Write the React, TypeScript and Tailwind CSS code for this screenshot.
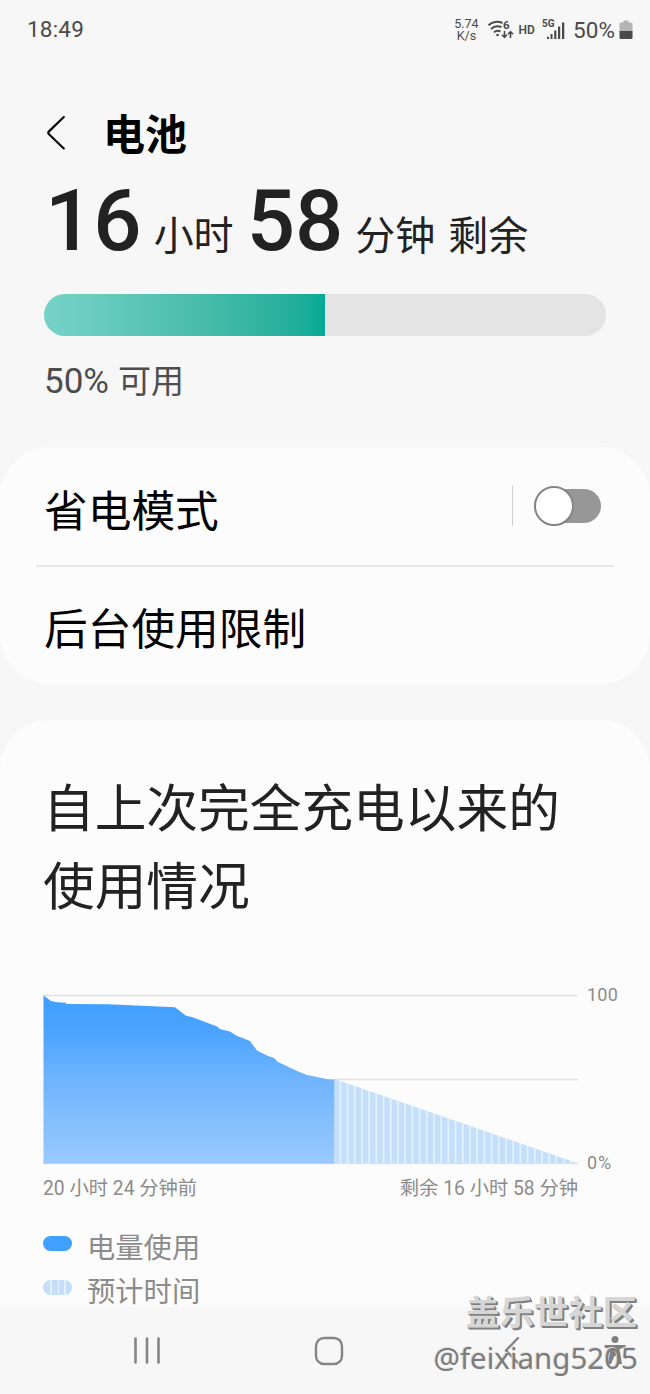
import type { ReactNode } from "react";

const FONT = "font-[Roboto,'Noto_Sans_CJK_SC',sans-serif]";

function StatusBar() {
  return (
    <header className="flex h-[58px] shrink-0 items-center pl-[27px] pr-[17px] text-[#4a4a4a]">
      <span className="text-[22.5px] leading-[28px] tracking-[0.2px]">18:49</span>
      <div className="ml-auto flex items-center">
        <div className="mt-px flex flex-col items-center text-[12.5px] leading-[12px]">
          <span>5.74</span>
          <span>K/s</span>
        </div>
        <svg width="28" height="22" viewBox="0 0 28 22" className="ml-[8px] mt-[2px]" fill="none" stroke="#4a4a4a" strokeWidth="2">
          <path d="M1.500 6.200C5 2.600 11 1.900 15.500 4" />
          <path d="M4 10C7 7.200 10.500 6.700 14.500 8" />
          <path d="M7 13.200C9 11.600 11.500 11.500 13.500 12.500" />
          <circle cx="10.500" cy="16" r="1.300" fill="#4a4a4a" stroke="none" />
          <path d="M17.500 12v6M15 15.800l2.500 2.600 2.500-2.600M23.500 19v-6M21 15.300l2.500-2.600 2.500 2.600" strokeWidth="1.600" />
          <text x="16" y="9.500" fontSize="11.500" fontWeight="700" fontFamily="Roboto" fill="#4a4a4a" stroke="none">6</text>
        </svg>
        <span className="ml-[4px] mt-[2px] text-[12px] font-semibold leading-none">HD</span>
        <div className="relative ml-[7px] mt-[2px] h-[22px] w-[24px]">
          <span className="absolute left-0 top-0 text-[10px] font-bold leading-none">5G</span>
          <svg width="24" height="22" viewBox="0 0 24 22" fill="#4a4a4a">
            <path d="M5 17.800h2v2.200H5zM8.500 15h2v5h-2zM12.200 11.500h2.200V20h-2.200zM16 7.500h2.200V20H16zM20 3.500h2.300V20H20z" />
          </svg>
        </div>
        <span className="ml-[7px] mt-px text-[22.5px] leading-[28px] tracking-[0.1px]">50%</span>
        <svg width="14" height="20" viewBox="0 0 14 20" className="ml-[4px] mt-px">
          <path d="M4.500.500h5v2H12a1.500 1.500 0 0 1 1.500 1.500v8H.500V4A1.500 1.500 0 0 1 2 2.500h2.500z" fill="#b5b5b5" />
          <path d="M.500 11h13v6.500a1.500 1.500 0 0 1-1.500 1.500H2a1.500 1.500 0 0 1-1.500-1.500z" fill="#4a4a4a" />
        </svg>
      </div>
    </header>
  );
}

function Big({ children }: { children: ReactNode }) {
  return <span className="text-[85px] font-medium">{children}</span>;
}

function Summary() {
  return (
    <section className="flex h-[389px] shrink-0 flex-col">
      <div className="flex h-[123px] items-center pl-[46px] pt-[29px]">
        <svg width="20" height="36" viewBox="0 0 20 36" fill="none" stroke="#0a0a0a" strokeWidth="2.200" strokeLinecap="round" strokeLinejoin="round" className="-mt-[3px]">
          <path d="M17.800 2 3 16.400Q1.600 17.800 3 19.200L17.800 33.500" />
        </svg>
        <h1 className="ml-[37px] mt-[4px] text-[42px] font-bold leading-[50px] text-black">电池</h1>
      </div>
      <div className="flex h-[80px] items-baseline whitespace-nowrap pl-[45px] text-[40px] leading-[80px] text-[#222]">
        <Big>16</Big>
        <span className="ml-[12px]">小时</span>
        <span className="ml-[13px]"><Big>58</Big></span>
        <span className="ml-[12px]">分钟</span>
        <span className="ml-[13px]">剩余</span>
      </div>
      <div className="ml-[44px] mt-[33px] h-[42px] w-[562px] shrink-0 overflow-hidden rounded-full bg-[#e4e4e4]">
        <div className="h-full w-1/2 bg-linear-to-r from-[#76d3c7] to-[#03aa96]" />
      </div>
      <p className="ml-[44px] mt-[26px] flex items-baseline text-[35px] leading-[40px] text-[#4d4d4d]">
        50%<span className="ml-[9px] text-[33px]">可用</span>
      </p>
    </section>
  );
}

function Toggle() {
  return (
    <div className="flex h-[40px] w-[67px] items-center">
      <div className="flex h-[34px] w-full items-center rounded-full bg-[#979797]">
        <div className="size-[40px] shrink-0 rounded-full border-2 border-[#858585] bg-white" />
      </div>
    </div>
  );
}

function ModeCard() {
  return (
    <section className="flex h-[237px] shrink-0 flex-col rounded-[50px] bg-[#fcfcfc] px-[36px] text-[43.700px] leading-[60px] text-black">
      <div className="flex h-[120px] items-center border-b-2 border-[#e8e8e8] pl-[8px] pr-[13px]">
        <span className="mt-[11px]">省电模式</span>
        <div className="ml-auto flex items-center gap-[21px]">
          <div className="h-[40px] w-px bg-[#cdcdcd]" />
          <Toggle />
        </div>
      </div>
      <div className="flex flex-1 items-center pl-[8px] pt-[9px]">后台使用限制</div>
    </section>
  );
}

const FORECAST_START = 291.5;
const STRIPES = Array.from({ length: 33 }, (_, i) => 296.5 + i * 7.2);

function Chart() {
  return (
    <svg width="536" height="172" viewBox="0 0 536 172" className="shrink-0">
      <defs>
        <linearGradient id="used" x1="0" y1="0" x2="0" y2="1">
          <stop offset="0" stopColor="#3f9ffe" />
          <stop offset="0.2" stopColor="#4aa3fe" />
          <stop offset="0.5" stopColor="#6fb4fe" />
          <stop offset="1" stopColor="#99cafd" />
        </linearGradient>
        <clipPath id="forecast">
          <path d={`M${FORECAST_START} 86L534 170H${FORECAST_START}z`} />
        </clipPath>
      </defs>
      <path d="M0 2.500H535M290 86.500H535M0 170.500H535" stroke="#e0e0e0" strokeWidth="1.500" />
      <g clipPath="url(#forecast)">
        <rect x={FORECAST_START} y="80" width="244" height="90" fill="#c5dffb" />
        {STRIPES.map((x) => (
          <rect key={x} x={x} y="80" width="1.700" height="90" fill="#e1f3fe" />
        ))}
      </g>
      <path
        d="M.500 2.500 8 8l6 1.300 9 .400v1.300l42 .200 67 3 11 8.500 6 1.300 25 9.500 3 2.500 10 2.500 6 4 14 5.500 7 9.500 11 5.500 6 2 4 4 19 9 10 4 21 4.300 6.500.200V170.500H.500z"
        fill="url(#used)"
      />
    </svg>
  );
}

function UsageCard() {
  return (
    <section className="flex h-[587px] shrink-0 flex-col overflow-hidden rounded-t-[50px] bg-[#fcfcfc] pl-[43px] text-[#8b8b8b]">
      <h2 className="mt-[51px] text-[51.700px] leading-[78px] text-[#222]">
        自上次完全充电以来的
        <br />
        使用情况
      </h2>
      <div className="mt-[66px] flex h-[172px]">
        <Chart />
        <div className="ml-[8px] flex flex-col justify-between text-[18px] leading-[20px] tracking-[0.2px]">
          <span className="-mt-[8px]">100</span>
          <span className="-mb-[8px] tracking-[0.8px]">0%</span>
        </div>
      </div>
      <div className="mt-[10px] flex w-[535px] justify-between text-[19.300px] leading-[28px]">
        <span>20 小时 24 分钟前</span>
        <span>剩余 16 小时 58 分钟</span>
      </div>
      <ul className="mt-[22px] text-[28.300px] leading-[44px]">
        <li className="flex h-[44px] items-center">
          <span className="mb-[8px] h-[15px] w-[29px] rounded-full bg-[#419ffe]" />
          <span className="ml-[15px] mt-[3px]">电量使用</span>
        </li>
        <li className="flex h-[44px] items-center">
          <span className="mb-[8px] flex h-[15px] w-[29px] gap-[1.500px] overflow-hidden rounded-full bg-[#e1f1fd]">
            <i className="w-[7px] bg-[#c5dffb]" />
            <i className="w-[6px] bg-[#c5dffb]" />
            <i className="w-[5px] bg-[#c5dffb]" />
            <i className="flex-1 bg-[#c5dffb]" />
          </span>
          <span className="ml-[15px] mt-[3px]">预计时间</span>
        </li>
      </ul>
    </section>
  );
}

function NavBar() {
  return (
    <nav className="relative flex h-[87px] shrink-0 items-center">
      <svg width="28" height="30" viewBox="0 0 28 30" className="ml-[133px]" stroke="#858585" strokeWidth="2.600" strokeLinecap="round">
        <path d="M2.500 2.500v24M14 2.500v24M25.500 2.500v24" />
      </svg>
      <svg width="30" height="30" viewBox="0 0 30 30" className="ml-[153px]" fill="none" stroke="#858585" strokeWidth="2.400">
        <rect x="2" y="2" width="26" height="26" rx="8" />
      </svg>
      <svg width="18" height="30" viewBox="0 0 18 30" className="ml-[159px]" fill="none" stroke="#858585" strokeWidth="2.400" strokeLinecap="round">
        <path d="M15 2 3 14.500 15 27" />
      </svg>
      <svg width="24" height="32" viewBox="0 0 24 32" className="ml-[82px]" fill="#808080">
        <circle cx="12" cy="4.500" r="3.500" />
        <path d="M1.500 10h21v2.500l-6 1.500 2.500 15h-3L12.500 21h-1L8 29H5l2.500-15-6-1.500z" />
      </svg>
      <div className="absolute -top-[14px] right-[12px] flex flex-col items-end whitespace-nowrap">
        <span className="mr-[1px] text-[34.300px] font-bold leading-[40px] text-[#d6d6d6] [text-shadow:1px_1px_0_#808080,2px_2px_0_#808080]">盖乐世社区</span>
        <span className="mt-[5px] font-['Noto_Sans',sans-serif] text-[29.500px] leading-[40px] text-[#7c7c7c] [text-shadow:-1px_-1px_0_#dedede]">@feixiang5205</span>
      </div>
    </nav>
  );
}

export default function App() {
  return (
    <main className={`flex h-[1394px] w-[650px] flex-col overflow-hidden bg-[#f7f7f7] font-normal ${FONT}`}>
      <StatusBar />
      <Summary />
      <ModeCard />
      <div className="h-[36px] shrink-0" />
      <UsageCard />
      <NavBar />
    </main>
  );
}
